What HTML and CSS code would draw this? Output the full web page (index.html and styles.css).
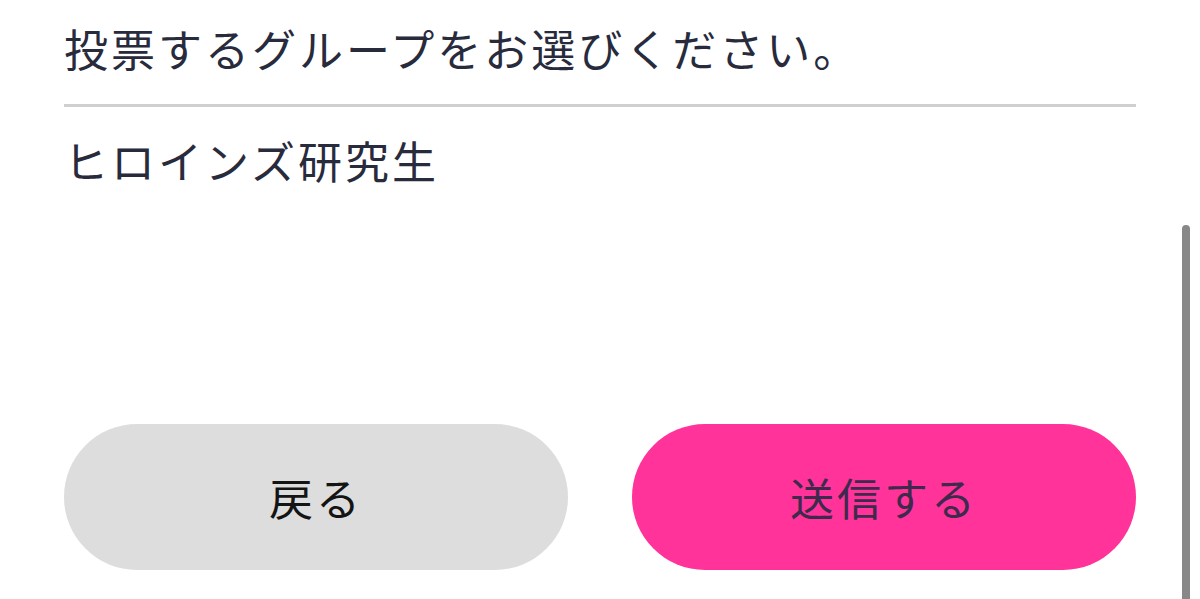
FILE: index.html
```html
<!DOCTYPE html>
<html lang="ja">
<head>
<meta charset="utf-8">
<link rel="stylesheet" href="styles.css">
</head>
<body>
<main class="page">
  <section class="field">
    <p class="label">投票するグループをお選びください。</p>
    <div class="divider"></div>
    <p class="value">ヒロインズ研究生</p>
  </section>
  <div class="actions">
    <button class="btn btn-back">戻る</button>
    <button class="btn btn-submit">送信する</button>
  </div>
</main>
<div class="scroll-thumb"></div>
</body>
</html>
```
FILE: styles.css
```css
html, body {
  margin: 0;
  padding: 0;
  background: #ffffff;
  height: 599px;
  overflow: hidden;
}
body {
  font-family: "Noto Sans CJK JP", "Noto Sans", sans-serif;
  color: #282b3c;
  position: relative;
}
.page {
  display: flex;
  flex-direction: column;
  padding: 0 64px;
  height: 599px;
  box-sizing: border-box;
}
.field {
  display: flex;
  flex-direction: column;
}
.label, .value {
  margin: 0;
  font-size: 44px;
  line-height: 66px;
  letter-spacing: 3px;
  font-weight: 400;
}
.label {
  padding-top: 15px;
}
.divider {
  height: 3px;
  background: #cfcfd2;
  margin-top: 23px;
}
.value {
  margin-top: 20px;
}
.actions {
  display: grid;
  grid-template-columns: 1fr 1fr;
  gap: 64px;
  margin-top: auto;
  margin-bottom: 29px;
}
.btn {
  height: 146px;
  border: none;
  border-radius: 73px;
  font-family: inherit;
  font-size: 44px;
  letter-spacing: 3px;
  cursor: pointer;
}
.btn-back {
  background: #dddddd;
  color: #141414;
}
.btn-submit {
  background: #ff3399;
  color: #3d2a4c;
}
.scroll-thumb {
  position: absolute;
  right: 10px;
  top: 225px;
  width: 8px;
  height: 380px;
  border-radius: 4px;
  background: #888888;
}
```
